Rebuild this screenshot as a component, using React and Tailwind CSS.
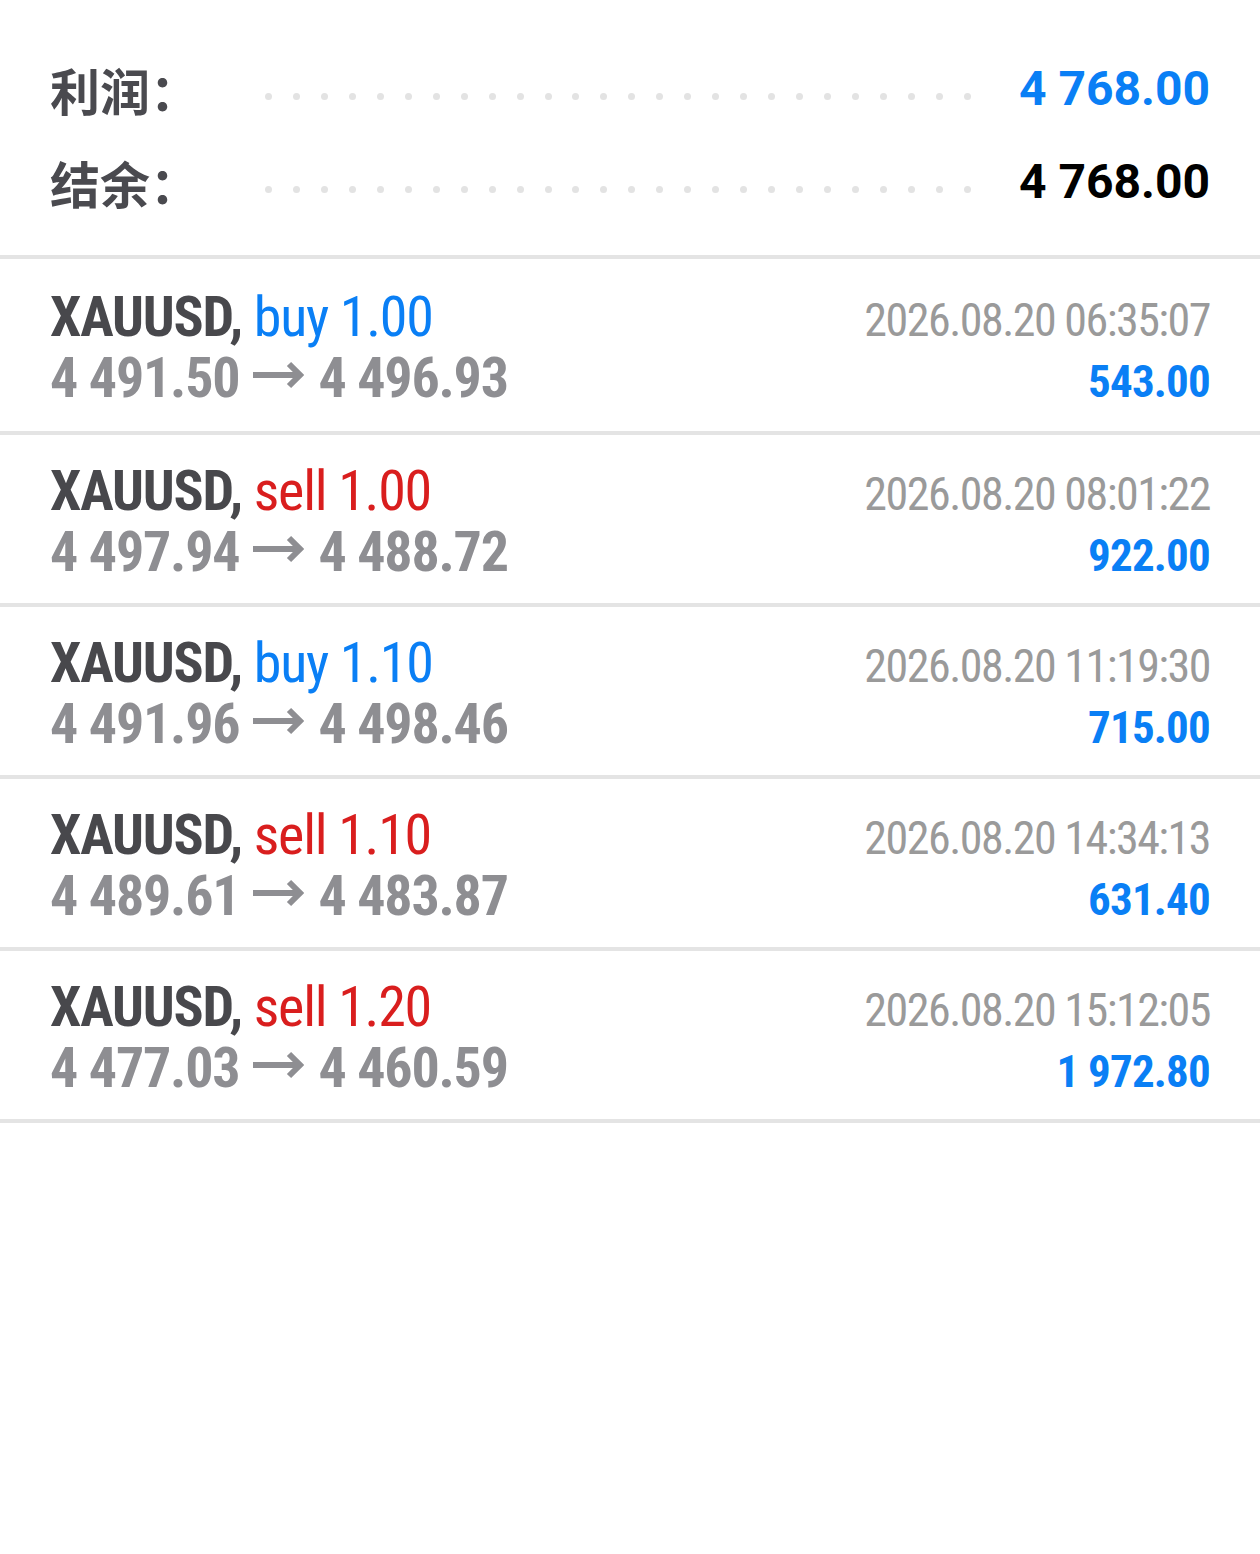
import React from "react";

const trades = [
  { side: "buy", lots: "1.00", open: "4 491.50", close: "4 496.93", time: "2026.08.20 06:35:07", profit: "543.00" },
  { side: "sell", lots: "1.00", open: "4 497.94", close: "4 488.72", time: "2026.08.20 08:01:22", profit: "922.00" },
  { side: "buy", lots: "1.10", open: "4 491.96", close: "4 498.46", time: "2026.08.20 11:19:30", profit: "715.00" },
  { side: "sell", lots: "1.10", open: "4 489.61", close: "4 483.87", time: "2026.08.20 14:34:13", profit: "631.40" },
  { side: "sell", lots: "1.20", open: "4 477.03", close: "4 460.59", time: "2026.08.20 15:12:05", profit: "1 972.80" },
];

const dots = Array.from({ length: 26 });

function SummaryLine({ label, value, valueClass }) {
  return (
    <div className="flex items-center h-[93px]">
      <div className="w-[215px] text-[50px] font-bold text-[#4a4a4f] [font-family:'Noto_Sans_CJK_SC',sans-serif]">
        {label}
      </div>
      <div className="w-[706px] mt-[14px] flex justify-between">
        {dots.map((_, i) => (
          <span key={i} className="w-[7px] h-[7px] rounded-full bg-[#e3e3e3]" />
        ))}
      </div>
      <div className={`flex-1 text-right text-[48px] font-bold -mt-[2px] ${valueClass}`}>{value}</div>
    </div>
  );
}

function Arrow() {
  return (
    <svg className="inline-block mx-[14px] align-[8px]" width="51" height="28" viewBox="0 0 51 28" fill="none">
      <path d="M0 14H47M36 3L47 14L36 25" stroke="#8e8e92" strokeWidth="6" />
    </svg>
  );
}

export default function App() {
  return (
    <div className="w-[1260px] min-h-[1554px] bg-white [font-family:Roboto,sans-serif]">
      {/* Summary */}
      <div className="px-[50px] pt-[43px] pb-[26px]">
        <SummaryLine label="利润：" value="4 768.00" valueClass="text-[#0a7ff5]" />
        <SummaryLine label="结余：" value="4 768.00" valueClass="text-black" />
      </div>
      <div className="h-[4px] bg-[#e4e4e4]" />

      {/* Deals */}
      {trades.map((t, i) => (
        <div key={i}>
          <div
            className={`px-[50px] [font-stretch:75%] ${
              i === 0 ? "pt-[28px] pb-[22px]" : "pt-[26px] pb-[20px]"
            }`}
          >
            <div className="flex justify-between items-baseline h-[61px] leading-[61px]">
              <div className="text-[56px] tracking-[-1.2px]">
                <span className="font-bold text-[#48484c]">XAUUSD, </span>
                <span className={t.side === "buy" ? "text-[#0a7ff5]" : "text-[#d91e1e]"}>
                  {t.side} {t.lots}
                </span>
              </div>
              <div className="text-[46px] tracking-[-1.5px] text-[#9a9a9a]">{t.time}</div>
            </div>
            <div className="flex justify-between items-baseline h-[61px] leading-[61px]">
              <div className="text-[56px] tracking-[-1.2px] font-bold text-[#8e8e92] whitespace-nowrap">
                {t.open}
                <Arrow />
                {t.close}
              </div>
              <div className="text-[45px] tracking-[-0.8px] font-bold text-[#0a7ff5]">{t.profit}</div>
            </div>
          </div>
          <div className="h-[4px] bg-[#e4e4e4]" />
        </div>
      ))}
    </div>
  );
}
